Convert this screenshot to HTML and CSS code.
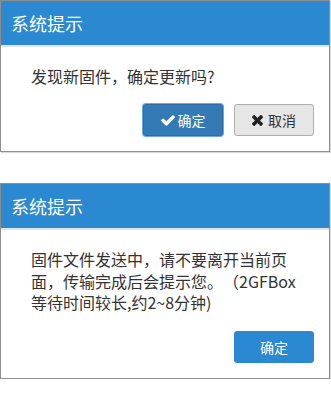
FILE: index.html
```html
<!DOCTYPE html>
<html lang="zh-CN">
<head>
<meta charset="utf-8">
<title>系统提示</title>
<link rel="stylesheet" href="styles.css">
</head>
<body>
<div class="page">
  <div class="dialog">
    <div class="dialog-header">系统提示</div>
    <div class="dialog-body">
      <p class="msg">发现新固件，确定更新吗?</p>
      <div class="actions">
        <button class="btn btn-primary">
          <svg class="ico-check" viewBox="121 334 1550 1188" aria-hidden="true"><path fill="#fff" d="M1671 566q0 40-28 68l-724 724-136 136q-28 28-68 28t-68-28l-136-136-362-362q-28-28-28-68t28-68l136-136q28-28 68-28t68 28l294 295 656-657q28-28 68-28t68 28l136 136q28 28 28 68z"/></svg>
          <span>确定</span>
        </button>
        <button class="btn btn-default">
          <svg class="ico-times" viewBox="302 366 1188 1188" aria-hidden="true"><path fill="#222" d="M1490 1322q0 40-28 68l-136 136q-28 28-68 28t-68-28l-294-294-294 294q-28 28-68 28t-68-28l-136-136q-28-28-28-68t28-68l294-294-294-294q-28-28-28-68t28-68l136-136q28-28 68-28t68 28l294 294 294-294q28-28 68-28t68 28l136 136q28 28 28 68t-28 68l-294 294 294 294q28 28 28 68z"/></svg>
          <span>取消</span>
        </button>
      </div>
    </div>
  </div>

  <div class="dialog">
    <div class="dialog-header">系统提示</div>
    <div class="dialog-body">
      <p class="msg">固件文件发送中，请不要离开当前页面，传输完成后会提示您。（2GFBox等待时间较长,约2~8分钟)</p>
      <div class="actions">
        <button class="btn btn-blue"><span>确定</span></button>
      </div>
    </div>
  </div>
</div>
</body>
</html>
```

FILE: styles.css
```css
html, body {
  margin: 0;
  padding: 0;
  background: #fff;
}

body {
  font-family: "Noto Sans CJK SC", "Noto Sans", sans-serif;
  color: #333;
  text-spacing-trim: space-all;
}

.page {
  display: flex;
  flex-direction: column;
  gap: 31px;
}

.dialog {
  width: 330px;
  box-sizing: border-box;
  border: 1px solid #8e8e8e;
  background: #fff;
  box-shadow: 1px 1px 1px rgba(0, 0, 0, 0.15);
}

.dialog-header {
  height: 46px;
  box-sizing: border-box;
  padding: 0 10px;
  background: #2a89d1;
  color: #fff;
  font-size: 18px;
  display: flex;
  align-items: center;
  border-bottom: 2px solid #e5e5e5;
}

.dialog-body {
  padding: 19px 15px 15px 30px;
}

.msg {
  margin: 0 15px 0 0;
  font-size: 16px;
  line-height: 21.4px;
  color: #333;
}

.actions {
  display: flex;
  justify-content: flex-end;
  gap: 11px;
  margin-top: 17px;
}

.btn {
  width: 80px;
  height: 32px;
  box-sizing: border-box;
  border-radius: 3px;
  border: 1px solid transparent;
  font-family: inherit;
  font-size: 14px;
  padding: 0;
  display: flex;
  align-items: center;
  justify-content: center;
  gap: 3px;
  cursor: pointer;
}

.btn-primary {
  background: #337ab7;
  border-color: #2e6da4;
  color: #fff;
  box-shadow: 0 0 0 1px #6ea8e0;
}

.btn-default {
  background: #e6e6e6;
  border-color: #adadad;
  color: #333;
  gap: 5px;
}

.btn-blue {
  background: #2a89d1;
  border-color: #2a89d1;
  color: #fff;
}

.ico-check {
  width: 14px;
  height: 11px;
}

.ico-times {
  width: 11px;
  height: 11px;
}
```
